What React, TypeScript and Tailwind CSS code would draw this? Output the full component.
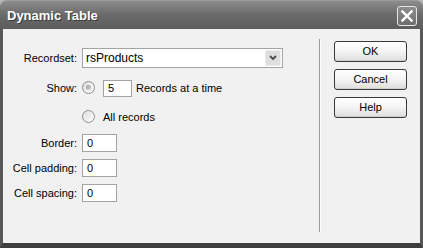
import React from "react";

function Radio({ checked }: { checked?: boolean }) {
  return (
    <div className="relative w-[13px] h-[13px] rounded-full border border-[#8e8e8e] bg-gradient-to-br from-[#dcdcdc] to-[#ffffff] flex items-center justify-center shrink-0">
      {checked && <div className="w-[5px] h-[5px] rounded-full bg-gradient-to-br from-[#9a9a9a] to-[#d6d6d6]" />}
    </div>
  );
}

function TextBox({ value, w, h }: { value: string; w: string; h: string }) {
  return (
    <div className={`${w} ${h} border border-[#a3a3a3] bg-white flex items-center pl-[4px] shrink-0`}>
      <span>{value}</span>
    </div>
  );
}

function Btn({ label }: { label: string }) {
  return (
    <div className="w-[73px] h-[21px] rounded-[3px] border border-[#3a3a3a] bg-gradient-to-b from-[#ffffff] via-[#f4f4f4] to-[#dedede] flex items-center justify-center shadow-[inset_0_-1px_0_#cfcfcf]">
      <span>{label}</span>
    </div>
  );
}

export default function App() {
  return (
    <div
      className="w-[423px] h-[248px] flex flex-col bg-[#b5b5b5] text-[11px] text-black"
      style={{ fontFamily: '"Liberation Sans", Arial, sans-serif' }}
    >
      <div className="h-[29px] rounded-t-[7px] bg-gradient-to-b from-[#8c8c8c] via-[#6a6a6a] to-[#5c5c5c] flex items-center justify-between pl-[7px] pr-[6px] border-t border-[#9a9a9a] shrink-0">
        <span className="text-white font-bold text-[13px] mt-[2px] [text-shadow:1px_1px_0_#3a3a3a]">Dynamic Table</span>
        <div className="w-[20px] h-[20px] mt-[2px] rounded-[3px] border border-[#e6e6e6] bg-gradient-to-b from-[#8e8e8e] to-[#6e6e6e] flex items-center justify-center">
          <svg width="12" height="12" viewBox="0 0 12 12">
            <path d="M1.5 1.5 L10.5 10.5 M10.5 1.5 L1.5 10.5" stroke="#ffffff" strokeWidth="2.4" strokeLinecap="square" />
          </svg>
        </div>
      </div>
      <div className="flex-1 flex bg-[#f1f1f1] border-l-[3px] border-r-[3px] border-b-[5px] border-l-[#575757] border-r-[#575757] border-b-[#3e3e3e]">
        <div className="w-[316px] flex flex-col pt-[19px]">
          <div className="flex items-center h-[20px]">
            <div className="w-[74px] text-right pr-[0px]">Recordset:</div>
            <div className="ml-[5px] w-[201px] h-[20px] border border-[#a3a3a3] bg-white flex items-center justify-between pl-[3px] pr-[1px]">
              <span className="text-[12px]">rsProducts</span>
              <div className="w-[16px] h-[16px] bg-[#dedede] border border-[#ececec] flex items-center justify-center">
                <svg width="8" height="6" viewBox="0 0 8 6">
                  <path d="M1 1 L4 4 L7 1" stroke="#4a4a4a" strokeWidth="1.8" fill="none" />
                </svg>
              </div>
            </div>
          </div>
          <div className="flex items-center h-[17px] mt-[12px]">
            <div className="w-[74px] text-right">Show:</div>
            <div className="ml-[5px] flex items-center">
              <div className="-mt-[3px]"><Radio checked /></div>
              <div className="ml-[8px]"><TextBox value="5" w="w-[29px]" h="h-[17px]" /></div>
              <span className="ml-[4px]">Records at a time</span>
            </div>
          </div>
          <div className="flex items-center h-[17px] mt-[12px]">
            <div className="w-[74px]" />
            <div className="ml-[5px] flex items-center">
              <div className="-mt-[2px]"><Radio /></div>
              <span className="ml-[8px]">All records</span>
            </div>
          </div>
          <div className="flex items-center h-[18px] mt-[8px]">
            <div className="w-[74px] text-right">Border:</div>
            <div className="ml-[5px]"><TextBox value="0" w="w-[35px]" h="h-[18px]" /></div>
          </div>
          <div className="flex items-center h-[18px] mt-[7px]">
            <div className="w-[74px] text-right">Cell padding:</div>
            <div className="ml-[5px]"><TextBox value="0" w="w-[35px]" h="h-[18px]" /></div>
          </div>
          <div className="flex items-center h-[18px] mt-[7px]">
            <div className="w-[74px] text-right">Cell spacing:</div>
            <div className="ml-[5px]"><TextBox value="0" w="w-[35px]" h="h-[18px]" /></div>
          </div>
        </div>
        <div className="flex flex-col pt-[10px] pb-[11px]">
          <div className="flex-1 w-[1px] bg-[#9c9c9c] shadow-[1px_0_0_#ffffff]" />
        </div>
        <div className="flex flex-col gap-[7px] pt-[12px] pl-[14px]">
          <Btn label="OK" />
          <Btn label="Cancel" />
          <Btn label="Help" />
        </div>
      </div>
    </div>
  );
}
